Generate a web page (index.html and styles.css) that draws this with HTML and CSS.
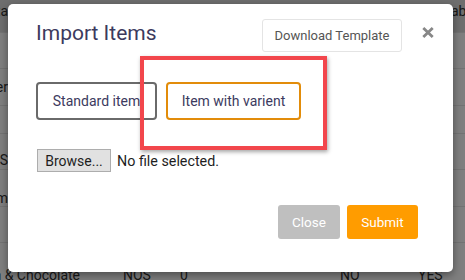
FILE: index.html
```html
<!DOCTYPE html>
<html lang="en">
<head>
<meta charset="utf-8">
<title>Import Items</title>
<link rel="stylesheet" href="styles.css">
</head>
<body>
<div class="table">
  <div class="row head">
    <div class="cell clip"><span>Data</span></div>
    <div class="cell spacer"></div>
    <div class="cell right-start">Available</div>
  </div>
  <div class="row r1"></div>
  <div class="row r2">
    <div class="cell clip"><span>Butter</span></div>
  </div>
  <div class="row r3"></div>
  <div class="row r4">
    <div class="cell clip"><span>CANS</span></div>
  </div>
  <div class="row r5">
    <div class="cell clip"><span>Ice Cream</span></div>
  </div>
  <div class="row r6"></div>
  <div class="row r7">
    <div class="cell clip wide"><span>Vanilla Cream &amp; Chocolate</span></div>
    <div class="cell c-nos">NOS</div>
    <div class="cell c-zero">0</div>
    <div class="cell c-no">NO</div>
    <div class="cell c-yes">YES</div>
  </div>
</div>
<div class="overlay"></div>

<div class="modal">
  <div class="modal-header">
    <h1 class="title">Import Items</h1>
    <button class="btn-template">Download Template</button>
    <button class="btn-x" aria-label="Close">
      <svg width="12" height="11" viewBox="0 0 12 11"><path d="M1.3 1 L10.7 10 M10.7 1 L1.3 10" stroke="#878787" stroke-width="2.8" fill="none"/></svg>
    </button>
  </div>
  <div class="choice-row">
    <button class="choice standard">Standard item</button>
    <button class="choice variant">Item with varient</button>
  </div>
  <div class="file-row">
    <span class="browse">Browse...</span>
    <span class="file-name">No file selected.</span>
  </div>
  <div class="footer">
    <button class="btn close">Close</button>
    <button class="btn submit">Submit</button>
  </div>
</div>
<div class="annotation"></div>
</body>
</html>
```
FILE: styles.css
```css
* { box-sizing: border-box; }
html, body {
  margin: 0;
  padding: 0;
}
body {
  width: 465px;
  height: 280px;
  overflow: hidden;
  position: relative;
  background: #fff;
  font-family: Roboto, "Liberation Sans", sans-serif;
}

/* background table */
.table {
  display: flex;
  flex-direction: column;
}
.row {
  display: flex;
  align-items: center;
  border-bottom: 1px solid #e6e6e6;
  font-size: 14px;
  color: #333;
  white-space: nowrap;
  flex: none;
}
.head { height: 33px; background: #dcdcdc; align-items: flex-start; padding-top: 3px; }
.r1 { height: 36px; }
.r2 { height: 37px; }
.r3 { height: 28px; }
.r4 { height: 36px; align-items: flex-end; padding-bottom: 1px; }
.r5 { height: 37px; align-items: flex-end; padding-bottom: 0; }
.r6 { height: 36px; }
.r7 { height: 40px; align-items: flex-end; padding-bottom: 0; border-bottom: 0; }
.cell { flex: none; }
.clip {
  width: 8px;
  overflow: hidden;
  display: flex;
  justify-content: flex-end;
}
.clip.wide { width: 80px; }
.spacer { width: 413px; }
.c-nos { margin-left: 43px; width: 57px; }
.c-zero { width: 160px; }
.c-no { width: 78px; }

.overlay {
  position: absolute;
  inset: 0;
  background: rgba(0, 0, 0, 0.5);
}

/* modal */
.modal {
  position: absolute;
  left: 8px;
  top: 4px;
  width: 445px;
  height: 268px;
  background: #fff;
  border-radius: 5px;
  box-shadow: 0 3px 9px rgba(0, 0, 0, 0.4);
  padding: 0 35px 0 28px;
  display: flex;
  flex-direction: column;
}
.modal-header {
  display: flex;
  align-items: flex-start;
}
.title {
  flex: 1;
  margin: 17px 0 0 0;
  font-size: 21px;
  line-height: 24px;
  font-weight: 400;
  color: #3c3a5e;
}
.btn-template {
  margin-top: 15px;
  width: 140px;
  height: 33px;
  border: 1px solid #e4e4e4;
  border-radius: 3px;
  background: #fff;
  color: #555;
  font-family: Roboto, "Liberation Sans", sans-serif;
  font-size: 13px;
  padding: 0;
}
.btn-x {
  margin: 23px -16px 0 20px;
  width: 12px;
  height: 11px;
  padding: 0;
  border: 0;
  background: none;
  display: flex;
}

.choice-row {
  display: flex;
  gap: 9px;
  margin-top: 30px;
}
.choice {
  height: 38px;
  border-radius: 4px;
  border: 2px solid #6a6a6a;
  background: #fff;
  color: #3c3a5e;
  font-family: Roboto, "Liberation Sans", sans-serif;
  font-size: 14px;
  padding: 0;
}
.standard { width: 121px; }
.variant { width: 135px; border-color: #e28c0a; }

.file-row {
  display: flex;
  align-items: center;
  gap: 6px;
  margin-top: 29px;
  padding-left: 1px;
  height: 23px;
}
.browse {
  width: 74px;
  height: 23px;
  border: 1px solid #adadad;
  background: #e1e1e1;
  color: #1e1e1e;
  font-size: 14px;
  display: flex;
  align-items: center;
  justify-content: center;
}
.file-name {
  font-size: 14.3px;
  color: #1e1e1e;
}

.footer {
  display: flex;
  justify-content: flex-end;
  gap: 7px;
  margin-top: 33px;
}
.btn {
  height: 34px;
  border: 0;
  border-radius: 3px;
  color: #fff;
  font-family: Roboto, "Liberation Sans", sans-serif;
  font-size: 13.5px;
  padding: 0;
}
.close { width: 62px; background: #bfbfbf; }
.submit { width: 71px; background: #ff9c00; }

/* red highlight annotation over the dialog */
.annotation {
  position: absolute;
  left: 140px;
  top: 56px;
  width: 187px;
  height: 94px;
  border: 4px solid #f2464c;
  box-shadow: 1px 2px 4px rgba(0, 0, 0, 0.35);
}
```
